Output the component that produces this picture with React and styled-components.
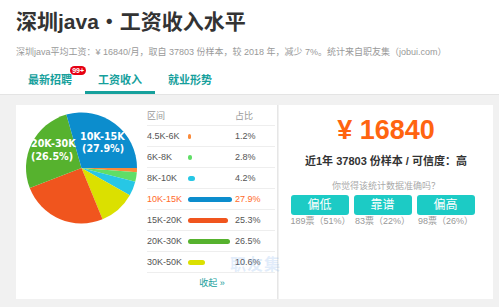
import React from "react";
import styled, { createGlobalStyle } from "styled-components";

const GlobalStyle = createGlobalStyle`
  html, body {
    margin: 0;
    padding: 0;
    background: #f1f1f1;
    font-family: "Liberation Sans", "Noto Sans CJK SC", sans-serif;
  }
`;

const Page = styled.div`
  width: 499px;
  height: 307px;
  overflow: hidden;
  background: #f1f1f1;
`;

const Header = styled.div`
  background: #fff;
  padding: 8px 16px 0;
  border-bottom: 1px solid #e4e4e4;
`;

const Title = styled.h1`
  margin: 0;
  font-size: 21px;
  line-height: 28px;
  font-weight: bold;
  color: #333;
`;

const Sub = styled.div`
  margin-top: 9px;
  font-size: 9px;
  line-height: 14px;
  color: #999;
  white-space: nowrap;
`;

const Tabs = styled.div`
  display: flex;
  margin-top: 11px;
  margin-left: -1px;
`;

const Tab = styled.div`
  position: relative;
  width: 70px;
  height: 24px;
  line-height: 21px;
  text-align: center;
  font-size: 11px;
  font-weight: bold;
  color: #16a09c;
  box-sizing: border-box;
  border-bottom: 3px solid ${(p) => (p.$active ? "#16a09c" : "transparent")};
`;

const Badge = styled.span`
  position: absolute;
  top: -4px;
  right: -1px;
  background: #e60012;
  color: #fff;
  font-size: 7px;
  line-height: 9px;
  height: 9px;
  padding: 0 2px;
  border-radius: 5px;
  font-weight: bold;
`;

const Main = styled.div`
  display: flex;
  padding: 10px 5px 0 16px;
`;

const LeftCard = styled.div`
  position: relative;
  flex: none;
  width: 262px;
  height: 194px;
  box-sizing: border-box;
  padding: 7px 0 0 9px;
  background: #fff;
  border-right: 1px solid #e6e6e6;
  display: flex;
`;

const RightCard = styled.div`
  flex: none;
  width: 214px;
  height: 194px;
  margin-left: 1px;
  background: #fff;
  display: flex;
  flex-direction: column;
  align-items: center;
`;

const PieBox = styled.div`
  width: 113px;
  height: 113px;
  flex: none;
`;

const TableWrap = styled.div`
  margin-left: 9px;
  margin-top: -7px;
  width: 128px;
  flex: none;
  display: flex;
  flex-direction: column;
`;

const Row = styled.div`
  display: grid;
  grid-template-columns: 41px 47px 1fr;
  align-items: center;
  height: 21px;
  border-bottom: 1px solid #eee;
  box-sizing: border-box;
  font-size: 9px;
  color: ${(p) => (p.$hi ? "#ff6a2b" : p.$head ? "#999" : "#555")};
`;

const Bar = styled.div`
  height: 5px;
  border-radius: 3px;
  background: ${(p) => p.$color};
`;

const Collapse = styled.div`
  text-align: center;
  font-size: 9px;
  color: #16a09c;
  margin-top: 3px;
  padding-left: 2px;
`;

const Watermark = styled.div`
  position: absolute;
  left: 214px;
  top: 146px;
  white-space: nowrap;
  font-size: 16px;
  letter-spacing: 1px;
  color: rgba(120, 170, 235, 0.22);
  font-weight: bold;
  pointer-events: none;
`;

const Salary = styled.div`
  margin-top: 9px;
  font-size: 27px;
  line-height: 32px;
  font-weight: bold;
  color: #ff6410;
`;

const Meta = styled.div`
  margin-top: 8px;
  font-size: 11px;
  line-height: 14px;
  font-weight: bold;
  color: #333;
`;

const Ask = styled.div`
  margin-top: 12px;
  font-size: 9px;
  line-height: 12px;
  color: #aaa;
`;

const Votes = styled.div`
  display: grid;
  grid-template-columns: repeat(3, 58px);
  column-gap: 5px;
  margin-top: 3px;
  margin-right: 7px;
`;

const Vote = styled.div`
  display: flex;
  flex-direction: column;
  align-items: center;
`;

const VoteBtn = styled.div`
  width: 58px;
  height: 20px;
  line-height: 20px;
  text-align: center;
  background: #1ccbc5;
  color: #fff;
  font-size: 12px;
  border-radius: 3px;
`;

const VoteCount = styled.div`
  font-size: 9px;
  line-height: 12px;
  color: #999;
`;

const data = [
  { label: "4.5K-6K", pct: 1.2, color: "#fa8a3a" },
  { label: "6K-8K", pct: 2.8, color: "#5fde66" },
  { label: "8K-10K", pct: 4.2, color: "#27c7e5" },
  { label: "10K-15K", pct: 27.9, color: "#0c8dcd", hi: true },
  { label: "15K-20K", pct: 25.3, color: "#f0551e" },
  { label: "20K-30K", pct: 26.5, color: "#56b22e" },
  { label: "30K-50K", pct: 10.6, color: "#dbe000" },
];

const pieOrder = ["4.5K-6K", "6K-8K", "8K-10K", "30K-50K", "15K-20K", "20K-30K"];

function arc(cx, cy, r, a0, a1) {
  const p = (a) => {
    const rad = ((a - 90) * Math.PI) / 180;
    return [cx + r * Math.cos(rad), cy + r * Math.sin(rad)];
  };
  const [x0, y0] = p(a0);
  const [x1, y1] = p(a1);
  const large = a1 - a0 > 180 ? 1 : 0;
  return `M${cx},${cy} L${x0},${y0} A${r},${r} 0 ${large} 1 ${x1},${y1} Z`;
}

function Pie() {
  const cx = 56.5;
  const cy = 56;
  const r = 55.5;
  let a = 90;
  const slices = pieOrder.map((name) => {
    const d = data.find((x) => x.label === name);
    const start = a;
    a += d.pct * 3.6;
    return { ...d, start, end: a };
  });
  const blue = data[3];
  return (
    <svg width="113" height="113" viewBox="0 0 113 113">
      {slices.map((s) => (
        <path key={s.label} d={arc(cx, cy, r, s.start, s.end)} fill={s.color} />
      ))}
      <path d={arc(cx, cy, r, a, 450)} fill={blue.color} />
      <g fill="#fff" fontFamily="DejaVu Sans, sans-serif" fontWeight="bold" fontSize="9.6">
        <text x="55" y="28">10K-15K</text>
        <text x="57" y="40">(27.9%)</text>
        <text x="6" y="35">20K-30K</text>
        <text x="6" y="48">(26.5%)</text>
      </g>
    </svg>
  );
}

export default function App() {
  return (
    <Page>
      <GlobalStyle />
      <Header>
        <Title>深圳java・工资收入水平</Title>
        <Sub>
          深圳java平均工资：¥ 16840/月，取自 37803 份样本，较 2018 年，减少 7%。统计来自职友集（jobui.com）
        </Sub>
        <Tabs>
          <Tab>
            最新招聘<Badge>99+</Badge>
          </Tab>
          <Tab $active>工资收入</Tab>
          <Tab>就业形势</Tab>
        </Tabs>
      </Header>
      <Main>
        <LeftCard>
          <PieBox>
            <Pie />
          </PieBox>
          <TableWrap>
            <Row $head>
              <span>区间</span>
              <span />
              <span>占比</span>
            </Row>
            {data.map((d) => (
              <Row key={d.label} $hi={d.hi}>
                <span>{d.label}</span>
                <span>
                  <Bar $color={d.color} style={{ width: `${Math.max(d.pct * 1.58, 3)}px` }} />
                </span>
                <span>{d.pct.toFixed(1)}%</span>
              </Row>
            ))}
            <Collapse>收起 »</Collapse>
          </TableWrap>
          <Watermark>职友集</Watermark>
        </LeftCard>
        <RightCard>
          <Salary>¥ 16840</Salary>
          <Meta>近1年 37803 份样本 / 可信度：高</Meta>
          <Ask>你觉得该统计数据准确吗？</Ask>
          <Votes>
            <Vote>
              <VoteBtn>偏低</VoteBtn>
              <VoteCount>189票（51%）</VoteCount>
            </Vote>
            <Vote>
              <VoteBtn>靠谱</VoteBtn>
              <VoteCount>83票（22%）</VoteCount>
            </Vote>
            <Vote>
              <VoteBtn>偏高</VoteBtn>
              <VoteCount>98票（26%）</VoteCount>
            </Vote>
          </Votes>
        </RightCard>
      </Main>
    </Page>
  );
}
